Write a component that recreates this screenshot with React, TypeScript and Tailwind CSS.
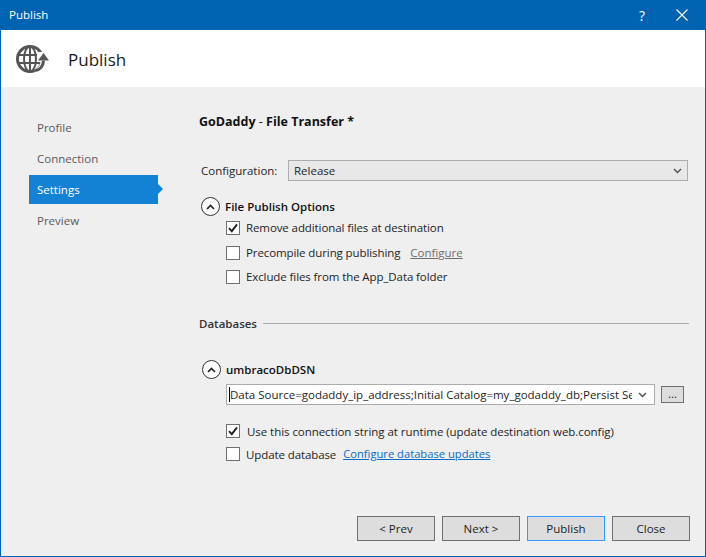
import React from "react";

const font = { fontFamily: '"Open Sans", "Noto Sans", sans-serif' };

function Collapse() {
  return (
    <span className="flex h-[19px] w-[19px] shrink-0 items-center justify-center rounded-full border-[1.5px] border-[#333] bg-white">
      <svg width="9" height="6" viewBox="0 0 9 6">
        <path d="M1 5l3.5-3.5L8 5" fill="none" stroke="#222" strokeWidth="1.6" />
      </svg>
    </span>
  );
}

function Check({ checked, label, wide, children }: { checked?: boolean; label: string; wide?: boolean; children?: React.ReactNode }) {
  return (
    <div className="flex h-[14px] items-center">
      <span className="flex h-[14px] w-[14px] shrink-0 items-center justify-center border border-[#707070] bg-white">
        {checked && (
          <svg width="10" height="10" viewBox="0 0 10 10">
            <path d="M1 5.2l2.8 3L9 1.4" fill="none" stroke="#222" strokeWidth="1.9" />
          </svg>
        )}
      </span>
      <span className={wide ? "ml-[7px] whitespace-nowrap text-[11.5px] tracking-[-0.05px] text-[#1e1e1e]" : "ml-[6px] whitespace-nowrap text-[11.5px] tracking-[-0.1px] text-[#1e1e1e]"}>{label}</span>
      {children}
    </div>
  );
}

function Chevron() {
  return (
    <svg width="9" height="6" viewBox="0 0 9 6">
      <path d="M1 1l3.5 3.5L8 1" fill="none" stroke="#555" strokeWidth="1.5" />
    </svg>
  );
}

function FooterButton({ label, focused }: { label: string; focused?: boolean }) {
  return (
    <button
      className={
        "h-[25px] w-[78px] border-[1.5px] bg-[#dddddd] text-[11.5px] text-[#1e1e1e] " +
        (focused ? "border-[#3399ff]" : "border-[#707070]")
      }
    >
      {label}
    </button>
  );
}

function NavItem({ label, active }: { label: string; active?: boolean }) {
  if (active) {
    return (
      <div className="relative flex h-[29px] w-[129px] items-center bg-[#1382d4] pl-[8px] text-white">
        {label}
        <span className="absolute left-full top-[9px] h-0 w-0 border-y-[5px] border-l-[5px] border-y-transparent border-l-[#1382d4]" />
      </div>
    );
  }
  return <div className="flex h-[31px] w-[129px] items-center pl-[8px] text-[#5a5a5a]">{label}</div>;
}

export default function App() {
  return (
    <div className="flex h-[557px] w-[706px] flex-col overflow-hidden border-x border-b border-[#0063b1] bg-[#efefef]" style={font}>
      <div className="flex h-[30px] shrink-0 items-center bg-[#0063b1] pl-[8px] text-[11.5px] text-white">
        <span>Publish</span>
        <span className="ml-auto text-[14px]">?</span>
        <svg className="ml-[31px] mr-[17px]" width="12" height="12" viewBox="0 0 12 12">
          <path d="M.5.500l11 11M11.500.500l-11 11" stroke="#fff" strokeWidth="1.1" />
        </svg>
      </div>

      <div className="flex h-[57px] shrink-0 items-center bg-white pl-[15px]">
        <svg width="34" height="30" viewBox="0 0 34 30">
          <circle cx="14" cy="15" r="12.500" fill="none" stroke="#555" strokeWidth="3" />
          <ellipse cx="14" cy="15" rx="6" ry="12.500" fill="none" stroke="#555" strokeWidth="2" />
          <path d="M2 11h24M2 19h24M14 3v24" stroke="#555" strokeWidth="2" />
          <path d="M19 28q9-1 9-11" fill="none" stroke="#fff" strokeWidth="7" />
          <path d="M21 8h12v10h-12z" fill="#fff" />
          <path d="M19 26.500q8-1 8.500-10" fill="none" stroke="#555" strokeWidth="3" />
          <path d="M22 16.500h11l-5.500-7.500z" fill="#555" />
        </svg>
        <span className="ml-[18px] pt-[3px] text-[17px] text-[#1a1a1a]">Publish</span>
      </div>

      <div className="flex min-h-0 flex-1 text-[11.5px]">
        <div className="w-[198px] shrink-0 pl-[28px] pt-[25px]">
          <NavItem label="Profile" />
          <NavItem label="Connection" />
          <div className="h-[1px]" />
          <NavItem label="Settings" active />
          <div className="h-[1px]" />
          <NavItem label="Preview" />
        </div>

        <div className="flex min-w-0 flex-1 flex-col pr-[16px] pt-[27px] text-[#1e1e1e]">
          <div className="flex h-[16px] items-center whitespace-pre text-[12.500px] font-bold text-[#111]">
            GoDaddy<span className="font-normal"> - </span>File Transfer *
          </div>

          <div className="ml-[2px] mr-[1px] mt-[30px] flex items-center">
            <span className="w-[87px] shrink-0">Configuration:</span>
            <div className="flex h-[21px] flex-1 items-center justify-between border-[1.5px] border-[#acacac] bg-[#e8e8e8] pl-[5px] pr-[5px]">
              <span>Release</span>
              <Chevron />
            </div>
          </div>

          <div className="ml-[2px] mt-[16px] flex items-center gap-[5px] font-semibold text-[#111]">
            <Collapse />
            <span>File Publish Options</span>
          </div>

          <div className="ml-[27px] mt-[5px] flex flex-col gap-[10px]">
            <Check checked label="Remove additional files at destination" />
            <div className="mt-[1px]">
              <Check label="Precompile during publishing">
                <span className="ml-[10px] text-[11.5px] text-[#6d6d6d] underline">Configure</span>
              </Check>
            </div>
            <Check label="Exclude files from the App_Data folder" />
          </div>

          <div className="mt-[31px] flex items-center gap-[6px]">
            <span className="font-semibold text-[#333]">Databases</span>
            <div className="h-px flex-1 bg-[#a9a9a9]" />
          </div>

          <div className="ml-[3px] mt-[28px] flex items-center gap-[5px] font-semibold text-[#111]">
            <Collapse />
            <span>umbracoDbDSN</span>
          </div>

          <div className="ml-[27px] mt-[5px] flex items-center">
            <div className="flex h-[21px] w-[429px] items-center border-[1.5px] border-[#acacac] bg-white pl-[2px] pr-[7px]">
              <span className="h-[15px] w-px shrink-0 bg-black" />
              <span className="min-w-0 flex-1 overflow-hidden whitespace-nowrap">
                Data Source=godaddy_ip_address;Initial Catalog=my_godaddy_db;Persist Sec
              </span>
              <span className="ml-[6px] shrink-0">
                <Chevron />
              </span>
            </div>
            <div className="ml-[6px] flex h-[17px] w-[23px] items-center justify-center border-[1.5px] border-[#707070] bg-[#dddddd] pb-[2px]">...</div>
          </div>

          <div className="ml-[27px] mt-[19px] flex flex-col gap-[9px]">
            <Check checked wide label="Use this connection string at runtime (update destination web.config)" />
            <Check label="Update database">
              <span className="ml-[7px] text-[11.2px] text-[#0a6cc4] underline">Configure database updates</span>
            </Check>
          </div>

          <div className="-mr-[1px] mt-auto mb-[15px] flex justify-end gap-[7px]">
            <FooterButton label="< Prev" />
            <FooterButton label="Next >" />
            <FooterButton label="Publish" focused />
            <FooterButton label="Close" />
          </div>
        </div>
      </div>
    </div>
  );
}
